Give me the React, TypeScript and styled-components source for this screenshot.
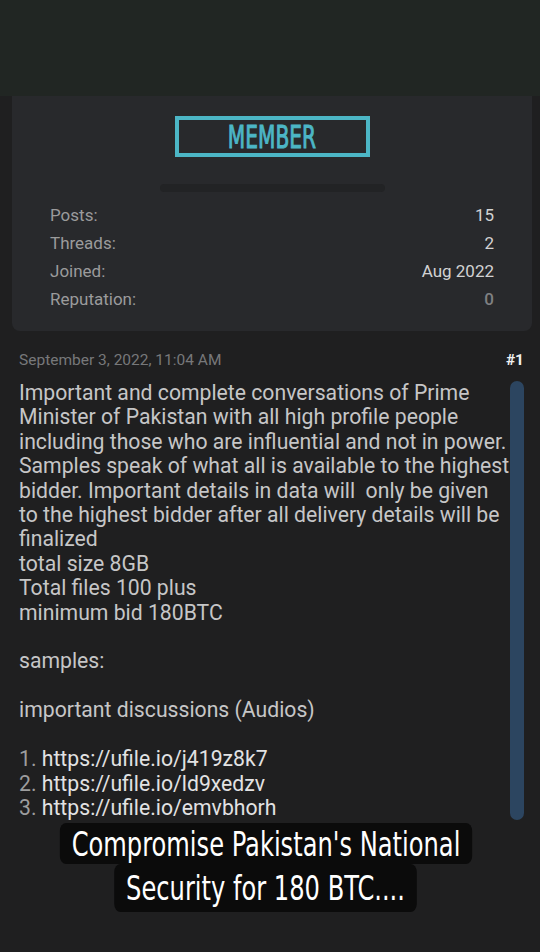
import React from 'react'
import styled, { createGlobalStyle } from 'styled-components'

const GlobalStyle = createGlobalStyle`
  body {
    margin: 0;
    background-color: #1f1f20;
    font-family: Roboto, "Liberation Sans", sans-serif;
  }
`

const Page = styled.div`
  width: 540px;
  height: 952px;
  overflow: hidden;
  background-color: #1f1f20;
`

const TopBar = styled.div`
  height: 96px;
  background-color: #212623;
`

const ProfileCard = styled.div`
  margin: 0 8px 0 12px;
  padding: 20px 38px 18px;
  background-color: #28292c;
  border-radius: 0 0 8px 8px;
  display: flex;
  flex-direction: column;
  align-items: center;
`

const Badge = styled.div`
  width: 195px;
  height: 41px;
  box-sizing: border-box;
  border: 4px solid #4cb6c6;
  display: flex;
  align-items: center;
  justify-content: center;
  color: #4cb6c6;
  font-family: "DejaVu Sans Condensed", "Liberation Sans Narrow", sans-serif;
  font-size: 32px;
`

const BadgeText = styled.span`
  display: inline-block;
  transform: scaleX(0.7);
  -webkit-text-stroke: 1px #4cb6c6;
`

const RepBar = styled.div`
  width: 225px;
  height: 8px;
  margin: 27px 0 9px;
  border-radius: 4px;
  background-color: #222325;
`

const StatRow = styled.div`
  width: 100%;
  height: 28px;
  display: flex;
  align-items: center;
  justify-content: space-between;
  font-size: 17px;
`

const StatLabel = styled.span`
  color: #9b9b9c;
`

const StatValue = styled.span<{ $muted?: boolean }>`
  color: ${(p) => (p.$muted ? '#7f8082' : '#d2d2d3')};
  font-weight: ${(p) => (p.$muted ? 500 : 400)};
`

const PostHeader = styled.div`
  margin: 19px 16px 0 19px;
  height: 20px;
  display: flex;
  align-items: center;
  justify-content: space-between;
  font-size: 15.5px;
`

const PostDate = styled.span`
  color: #77787a;
`

const PostNumber = styled.span`
  color: #f0f0f0;
  font-weight: 700;
`

const PostBody = styled.div`
  margin-top: 11px;
  padding-left: 19px;
  display: flex;
`

const PostText = styled.div`
  width: 492px;
  font-size: 21.2px;
  line-height: 24.4px;
  color: #c6c6c7;
  white-space: pre-wrap;
`

const LinkLine = styled.div`
  color: #9d9d9e;
`

const Link = styled.span`
  color: #e2e2e3;
`

const Scrollbar = styled.div`
  width: 14px;
  height: 439px;
  margin-left: -1px;
  border-radius: 7px;
  background-color: #2c4560;
`

const Caption = styled.div`
  margin: 3px 8px 0 0;
  display: flex;
  flex-direction: column;
  align-items: center;
  font-family: "DejaVu Sans Condensed", "Liberation Sans Narrow", sans-serif;
  color: #ffffff;
  font-size: 34px;
`

const CaptionLine = styled.div<{ $h: number }>`
  height: ${(p) => p.$h}px;
  padding: 0 15px;
  display: flex;
  align-items: center;
  background-color: #0b0b0b;
  border-radius: 8px;
  transform: scaleX(0.79);
  white-space: nowrap;
`

const stats = [
  { label: 'Posts:', value: '15' },
  { label: 'Threads:', value: '2' },
  { label: 'Joined:', value: 'Aug 2022' },
  { label: 'Reputation:', value: '0', muted: true },
]

const links = [
  'https://ufile.io/j419z8k7',
  'https://ufile.io/ld9xedzv',
  'https://ufile.io/emvbhorh',
]

const message = `Important and complete conversations of Prime Minister of Pakistan with all high profile people including those who are influential and not in power. Samples speak of what all is available to the highest bidder. Important details in data will  only be given to the highest bidder after all delivery details will be finalized
total size 8GB
Total files 100 plus
minimum bid 180BTC

samples:

important discussions (Audios)
`

const App: React.FC = () => {
  return (
    <Page>
      <GlobalStyle />
      <TopBar />
      <ProfileCard>
        <Badge>
          <BadgeText>MEMBER</BadgeText>
        </Badge>
        <RepBar />
        {stats.map((s) => (
          <StatRow key={s.label}>
            <StatLabel>{s.label}</StatLabel>
            <StatValue $muted={s.muted}>{s.value}</StatValue>
          </StatRow>
        ))}
      </ProfileCard>
      <PostHeader>
        <PostDate>September 3, 2022, 11:04 AM</PostDate>
        <PostNumber>#1</PostNumber>
      </PostHeader>
      <PostBody>
        <PostText>
          {message}
          <br />
          {links.map((l, i) => (
            <LinkLine key={l}>
              {i + 1}. <Link>{l}</Link>
            </LinkLine>
          ))}
        </PostText>
        <Scrollbar />
      </PostBody>
      <Caption>
        <CaptionLine $h={41}>Compromise Pakistan's National</CaptionLine>
        <CaptionLine $h={48}>Security for 180 BTC....</CaptionLine>
      </Caption>
    </Page>
  )
}

export default App
